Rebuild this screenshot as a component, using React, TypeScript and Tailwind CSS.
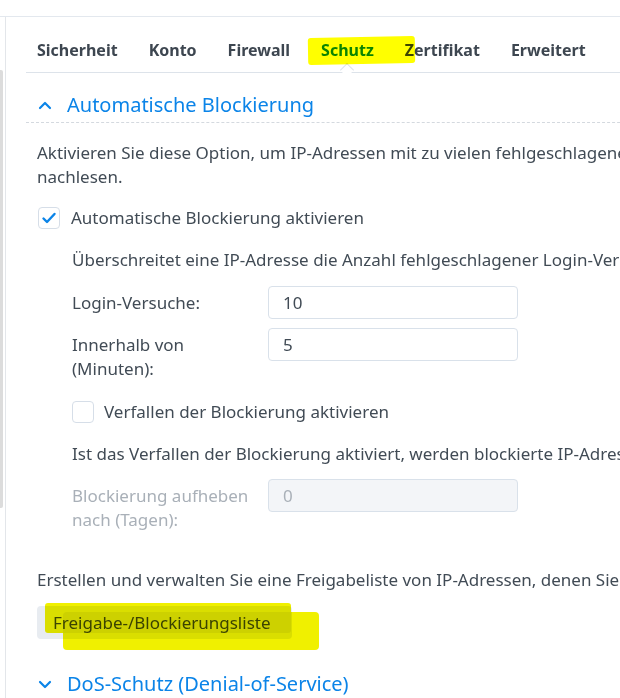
import React from "react";

const tabs = ["Sicherheit", "Konto", "Firewall", "Schutz", "Zertifikat", "Erweitert"];

function Checkbox({ checked }: { checked?: boolean }) {
  return (
    <span className="flex h-[22px] w-[22px] shrink-0 items-center justify-center rounded-[4px] border border-[#d6dee8] bg-white">
      {checked && (
        <svg width="16" height="16" viewBox="0 0 16 16" fill="none">
          <path d="M2.5 8.5l3.5 3.5 7.5-8" stroke="#0b84e8" strokeWidth="2.4" strokeLinecap="round" strokeLinejoin="round" />
        </svg>
      )}
    </span>
  );
}

function Chevron({ up }: { up?: boolean }) {
  return (
    <svg width="14" height="10" viewBox="0 0 14 10" fill="none" className="shrink-0">
      <path
        d={up ? "M2 8l5-5 5 5" : "M2 3l5 5 5-5"}
        stroke="#0b84e8"
        strokeWidth="2.2"
        strokeLinecap="round"
        strokeLinejoin="round"
      />
    </svg>
  );
}

function Field({ label, value, disabled }: { label: React.ReactNode; value: string; disabled?: boolean }) {
  return (
    <div className="flex items-start">
      <div className={`w-[196px] whitespace-nowrap pt-[5px] leading-[24px] ${disabled ? "text-[#a9b0b8]" : ""}`}>{label}</div>
      <div
        className={`h-[33px] w-[250px] rounded-[4px] border border-[#d9e1ea] pl-[14px] leading-[31px] ${
          disabled ? "bg-[#f3f5f8] text-[#a9b0b8]" : "bg-white"
        }`}
      >
        {value}
      </div>
    </div>
  );
}

export default function App() {
  return (
    <div className="relative h-[698px] w-[620px] overflow-hidden bg-white font-['Noto_Sans',sans-serif] text-[17px] text-[#414b55]">
      <div className="h-[17px] border-b border-[#e3e8ee]" />
      <div className="flex h-[681px]">
        <div className="relative w-[6px] shrink-0 border-r border-[#e3e6ea]">
          <div className="absolute left-0 top-[53px] h-[438px] w-[3px] rounded-r-[2px] bg-[#dcdcdc]" />
        </div>
        <div className="w-[1100px] shrink-0 pl-[20px]">
          {/* tabs */}
          <div className="relative flex h-[56px] items-center gap-[31px] border-b border-[#dde3ea] pl-[11px] pt-[10px] text-[16px] font-bold text-[#3d4650]">
            {tabs.map((t) => (
              <div key={t} className={`relative ${t === "Schutz" ? "text-[#0b84e8]" : ""}`}>
                {t}
                {t === "Schutz" && (
                  <span className="absolute left-1/2 top-[27px] h-[10px] w-[10px] -translate-x-1/2 rotate-45 border-l border-t border-[#dde3ea] bg-white" />
                )}
              </div>
            ))}
          </div>

          {/* Automatische Blockierung */}
          <div className="mt-[14px] flex h-[36px] items-center gap-[15px] border-b border-dashed border-[#d4d9df] pl-[12px] text-[20px] text-[#0b84e8]">
            <Chevron up />
            <span>Automatische Blockierung</span>
          </div>

          <div className="pl-[11px]">
            <p className="mt-[18px] whitespace-nowrap leading-[24px]">
              Aktivieren Sie diese Option, um IP-Adressen mit zu vielen fehlgeschlagenen Login-Versuchen automatisch zu blockieren. Weitere Informationen können Sie in der Hilfe
              <br />
              nachlesen.
            </p>

            <div className="mt-[17px] flex h-[24px] items-center gap-[11px] pl-[1px]">
              <Checkbox checked />
              <span>Automatische Blockierung aktivieren</span>
            </div>

            <div className="pl-[35px]">
              <p className="mt-[18px] whitespace-nowrap leading-[24px]">
                Überschreitet eine IP-Adresse die Anzahl fehlgeschlagener Login-Versuche innerhalb des festgelegten Zeitraums, wird sie blockiert.
              </p>
              <div className="mt-[14px] flex flex-col gap-[9px]">
                <Field label="Login-Versuche:" value="10" />
                <Field
                  label={
                    <>
                      Innerhalb von
                      <br />
                      (Minuten):
                    </>
                  }
                  value="5"
                />
              </div>

              <div className="mt-[19px] flex h-[24px] items-center gap-[10px]">
                <Checkbox />
                <span>Verfallen der Blockierung aktivieren</span>
              </div>

              <p className="mt-[18px] whitespace-nowrap leading-[24px]">
                Ist das Verfallen der Blockierung aktiviert, werden blockierte IP-Adressen nach der angegebenen Anzahl von Tagen wieder freigegeben.
              </p>

              <div className="mt-[13px]">
                <Field
                  disabled
                  label={
                    <>
                      Blockierung aufheben
                      <br />
                      nach (Tagen):
                    </>
                  }
                  value="0"
                />
              </div>
            </div>

            <p className="mt-[36px] whitespace-nowrap leading-[24px]">
              Erstellen und verwalten Sie eine Freigabeliste von IP-Adressen, denen Sie vertrauen, oder eine Blockierungsliste von IP-Adressen.
            </p>

            <button className="mt-[14px] h-[33px] w-[255px] rounded-[4px] bg-[#e8ecf1] pl-[16px] text-left text-[17px] text-[#414b55]">
              Freigabe-/Blockierungsliste
            </button>
          </div>

          {/* DoS-Schutz */}
          <div className="mt-[29px] flex h-[32px] items-center gap-[15px] pl-[12px] text-[20px] text-[#0b84e8]">
            <Chevron />
            <span>DoS-Schutz (Denial-of-Service)</span>
          </div>
        </div>
      </div>

      {/* highlighter marks */}
      <div className="pointer-events-none absolute left-[308px] top-[37px] h-[27px] w-[107px] -rotate-1 rounded-[3px] bg-[#ffff00] mix-blend-multiply" />
      <div className="pointer-events-none absolute left-[45px] top-[603px] h-[30px] w-[246px] rounded-[3px] bg-[#f0f000] mix-blend-multiply" />
      <div className="pointer-events-none absolute left-[63px] top-[612px] h-[38px] w-[256px] rounded-[4px] bg-[#f0f000] mix-blend-multiply" />
    </div>
  );
}
